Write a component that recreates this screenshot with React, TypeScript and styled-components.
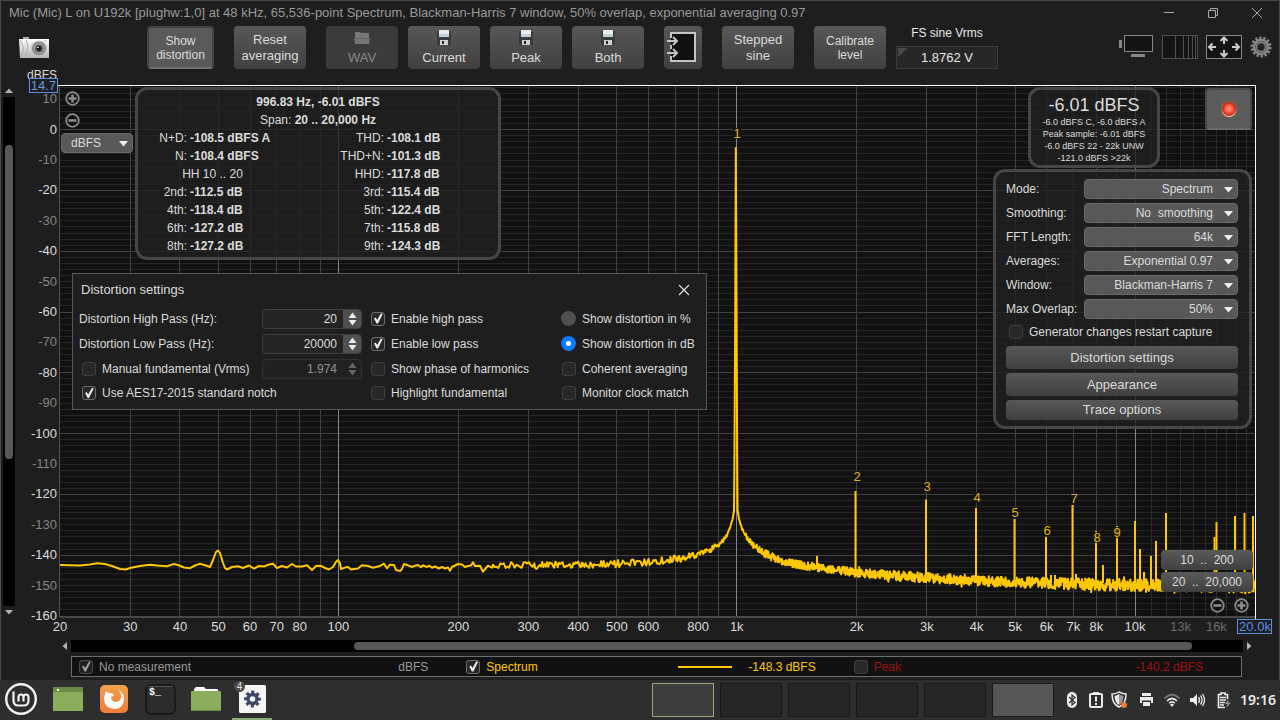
import React, { useEffect, useMemo, useRef, useState } from "react";
import styled, { createGlobalStyle, css } from "styled-components";

const sans = '"Liberation Sans", Arial, sans-serif';

const GlobalStyle = createGlobalStyle`
  * { box-sizing: border-box; }
  body { margin: 0; background: #1e1e1e; color: #dcdcdc; font: 12px/16px ${sans}; }
  button, input, select { font: inherit; color: inherit; margin: 0; }
`;

/* ---------- window frame ---------- */

const Screen = styled.div`
  display: flex;
  flex-direction: column;
  min-height: 100vh;
`;

const AppWindow = styled.main`
  flex: 1;
  display: flex;
  flex-direction: column;
  background: #1e1e1e;
  border: 1px solid #4a4a4a;
  border-bottom: 0;
  padding-bottom: 3px;
`;

const TitleBar = styled.header`
  display: flex;
  align-items: center;
  justify-content: space-between;
  height: 25px;
  padding: 0 14px 2px 8px;
`;

const WindowTitle = styled.h1`
  margin: 0;
  font-size: 13px;
  font-weight: normal;
  color: #9a9a9a;
`;

const WindowButtons = styled.div`
  display: flex;
  gap: 28px;
`;

const PlainButton = styled.button`
  display: flex;
  align-items: center;
  justify-content: center;
  padding: 0;
  border: 0;
  background: none;
  cursor: pointer;
`;

/* ---------- toolbar ---------- */

const Toolbar = styled.div`
  display: flex;
  align-items: flex-start;
  gap: 20px;
  height: 44px;
  padding: 0 7px 0 18px;
`;

const CameraButton = styled(PlainButton)`
  width: 31px;
  height: 43px;
  margin-right: 77px;
`;

const ToolGroup = styled.div<{ $gap: number }>`
  display: flex;
  gap: ${(p) => p.$gap}px;
`;

const ToolButton = styled.button<{ $pressed?: boolean; $compact?: boolean; $narrow?: boolean }>`
  display: flex;
  flex-direction: column;
  align-items: center;
  justify-content: center;
  width: ${(p) => (p.$narrow ? 38 : 72)}px;
  height: 43px;
  padding: 0;
  border: 0;
  border-radius: 4px;
  background: linear-gradient(#585858, #404040);
  font-size: ${(p) => (p.$compact ? 12 : 13)}px;
  line-height: ${(p) => (p.$compact ? 14 : 16)}px;
  ${(p) =>
    p.$pressed &&
    css`
      width: 67px;
      background: #5a5a5a;
      border: 2px solid #444;
      border-bottom-color: #707070;
    `}
  &:disabled { background: #3b3b3b; color: #8c8c8c; }
`;

const ButtonIcon = styled.span`
  display: flex;
  height: 18px;
  margin-bottom: 3px;
  align-items: center;
`;

const FsField = styled.label`
  display: flex;
  flex-direction: column;
  gap: 5px;
  width: 102px;
  text-align: center;
  line-height: 15px;
  color: #e8e8e8;
`;

const FsInput = styled.input`
  width: 102px;
  height: 23px;
  border: 1px solid #3d3d3d;
  background: linear-gradient(135deg, #484848 7px, transparent 7px) 1px 1px no-repeat, #272727;
  text-align: center;
  font-size: 13px;
`;

const ViewButtons = styled.div`
  display: flex;
  align-items: center;
  gap: 7px;
  height: 42px;
  margin-left: auto;
`;

/* ---------- graph ---------- */

const GraphRow = styled.section`
  flex: 1;
  display: flex;
  min-height: 540px;
`;

const VScroll = styled.div`
  display: flex;
  flex-direction: column;
  width: 12px;
  margin: 15px 0 20px 2px;
`;

const HScroll = styled.div`
  display: flex;
  height: 12px;
  margin: 2px 24px 0 58px;
`;

const ScrollArrow = styled(PlainButton)`
  width: 12px;
  height: 12px;
  flex: none;
`;

const VTrack = styled.div`
  flex: 1;
  display: grid;
  grid-template-rows: 48fr 314fr 147fr;
  padding: 0 2px;
  background: #000;
`;

const HTrack = styled.div`
  flex: 1;
  display: grid;
  grid-template-columns: 283fr 837fr 51fr;
  padding: 2px 0;
  background: #000;
`;

const VThumb = styled.div`
  grid-row: 2;
  border-radius: 4px;
  background: #585858;
`;

const HThumb = styled.div`
  grid-column: 2;
  border-radius: 4px;
  background: #585858;
`;

const ChartArea = styled.div`
  position: relative;
  flex: 1;
  min-width: 0;
`;

const ChartSvg = styled.svg`
  position: absolute;
  inset: 0;
  width: 100%;
  height: 100%;
  font-family: ${sans};
`;

const Panel = styled.div`
  position: absolute;
  border: 3px solid rgba(85, 85, 85, 0.75);
  border-radius: 12px;
  background: rgba(32, 32, 32, 0.8);
`;

const ResultsPanel = styled(Panel)`
  left: 120px;
  top: 17px;
  width: 366px;
  padding: 3px 0 2px;
  line-height: 18px;
  text-align: center;
`;

const ResultsTable = styled.table`
  width: 100%;
  table-layout: fixed;
  border-collapse: collapse;
  td, th { padding: 0; height: 18px; white-space: nowrap; }
  th { font-weight: normal; text-align: right; padding-right: 3px; }
  td { font-weight: bold; text-align: left; }
  .span { text-align: center; padding-right: 0; }
`;

const MeterPanel = styled(Panel)`
  top: 17px;
  right: 119px;
  width: 132px;
  padding: 4px 0 1px;
  text-align: center;
  font-size: 9px;
  line-height: 12px;
`;

const MeterValue = styled.div`
  font-size: 18px;
  line-height: 22px;
`;

const RecordButton = styled(PlainButton)`
  position: absolute;
  top: 18px;
  right: 27px;
  width: 47px;
  height: 42px;
  border: 2px solid #484848;
  border-bottom-color: #6c6c6c;
  border-radius: 4px;
  background: #5c5c5c;
`;

const SettingsPanel = styled(Panel)`
  top: 99px;
  right: 27px;
  width: 259px;
  padding: 7px 11px 6px 10px;
`;

const SettingRow = styled.label`
  display: flex;
  align-items: center;
  justify-content: space-between;
  height: 20px;
  margin-bottom: 4px;
`;

const RestartRow = styled.div`
  margin: 5px 0 6px;
`;

const SelectBox = styled.span<{ $width: number }>`
  position: relative;
  display: block;
  width: ${(p) => p.$width}px;
  height: 20px;
  svg { position: absolute; right: 5px; top: 8px; pointer-events: none; }
`;

const Select = styled.select<{ $left?: boolean }>`
  appearance: none;
  width: 100%;
  height: 20px;
  padding: ${(p) => (p.$left ? "0 18px 0 9px" : "0 24px 0 4px")};
  border: 1px solid #6a6a6a;
  border-radius: 4px;
  background: #585858;
  text-align-last: ${(p) => (p.$left ? "left" : "right")};
`;

const ButtonStack = styled.div`
  display: flex;
  flex-direction: column;
  gap: 4px;
`;

const PanelButton = styled.button<{ $short?: boolean }>`
  height: ${(p) => (p.$short ? 20 : 23)}px;
  padding: 0;
  border: 0;
  border-radius: 4px;
  background: linear-gradient(#585858, #404040);
  font-size: 13px;
`;

const UnitSelect = styled.div`
  position: absolute;
  left: 46px;
  top: 63px;
`;

const ZoomButtons = styled.div<{ $place: "y" | "x" }>`
  position: absolute;
  display: flex;
  ${(p) =>
    p.$place === "y"
      ? "left: 50px; top: 21px; flex-direction: column; gap: 7px;"
      : "right: 30px; bottom: 25px; gap: 9px;"}
`;

const RangeButtons = styled.div`
  position: absolute;
  right: 26px;
  bottom: 46px;
  display: flex;
  flex-direction: column;
  gap: 2px;
`;

const RangeButton = styled.button`
  width: 92px;
  height: 20px;
  padding: 0;
  border: 0;
  border-radius: 4px;
  background: linear-gradient(#5a5a5a, #404040);
  white-space: pre;
`;

/* ---------- form controls ---------- */

const CheckLabel = styled.label<{ $indent?: number }>`
  display: flex;
  align-items: center;
  gap: 6px;
  padding-left: ${(p) => p.$indent ?? 0}px;
  white-space: nowrap;
`;

const CheckBox = styled.input.attrs({ type: "checkbox" })`
  appearance: none;
  flex: none;
  width: 14px;
  height: 14px;
  border: 1px solid #404040;
  border-radius: 3px;
  background: #282828;
  &:checked { border-color: #6e6e6e; }
  &:checked::after {
    content: "";
    display: block;
    width: 12px;
    height: 12px;
    background: #eee;
    clip-path: polygon(17% 50%, 30% 42%, 43% 63%, 74% 8%, 90% 10%, 50% 92%, 38% 92%);
  }
  &:disabled { opacity: 0.65; }
`;

const Radio = styled.input.attrs({ type: "radio" })`
  appearance: none;
  flex: none;
  width: 15px;
  height: 15px;
  border-radius: 50%;
  background: #505050;
  &:checked { background: radial-gradient(circle, #fff 2px, #0a7aff 3px); }
`;

/* ---------- distortion dialog ---------- */

const Dialog = styled.section`
  position: absolute;
  left: 57px;
  top: 203px;
  width: 635px;
  padding: 6px 6px 4px;
  border: 1px solid #585858;
  background: #1e1e1e;
`;

const DialogHeader = styled.div`
  display: flex;
  align-items: center;
  justify-content: space-between;
  height: 20px;
  margin-bottom: 6px;
  padding: 0 10px 0 2px;
  h2 { margin: 0; font-size: 13px; font-weight: normal; }
`;

const DialogGrid = styled.div`
  display: grid;
  grid-template: 25px 25px 25px 24px / 183px 109px 190px 1fr;
  align-items: center;
`;

const WideCell = styled.div`
  grid-column: span 2;
`;

const Spinner = styled.span<{ $off?: boolean }>`
  display: flex;
  width: 100px;
  height: 20px;
  border: 1px solid #404040;
  border-radius: 4px;
  background: #242424;
  overflow: hidden;
  opacity: ${(p) => (p.$off ? 0.6 : 1)};
  input {
    flex: 1;
    min-width: 0;
    padding: 0 6px 0 0;
    border: 0;
    background: none;
    text-align: right;
  }
`;

const SpinArrows = styled.span<{ $off?: boolean }>`
  display: flex;
  flex-direction: column;
  justify-content: center;
  gap: 2px;
  width: 18px;
  background: ${(p) => (p.$off ? "none" : "#505050")};
`;

/* ---------- legend ---------- */

const Legend = styled.div`
  display: grid;
  grid-template-columns: repeat(3, 1fr);
  height: 21px;
  margin: 4px 37px 0 70px;
  padding-left: 7px;
  border: 1px solid #6e6e6e;
  background: #111;
`;

const LegendItem = styled.div<{ $color: string }>`
  display: flex;
  align-items: center;
  justify-content: space-between;
  padding-right: 38px;
  color: ${(p) => p.$color};
`;

const LegendValue = styled.span`
  display: flex;
  align-items: center;
  gap: 16px;
`;

const TraceSwatch = styled.i`
  width: 54px;
  height: 2px;
  background: #ffc800;
`;

/* ---------- desktop taskbar ---------- */

const Taskbar = styled.footer`
  display: flex;
  align-items: center;
  height: 40px;
  padding-right: 4px;
  background: #2e2e2e;
`;

const Launchers = styled.nav`
  display: flex;
  gap: 6px;
  align-self: stretch;
`;

const Launcher = styled(PlainButton)<{ $active?: boolean; $wide?: boolean }>`
  position: relative;
  width: ${(p) => (p.$wide ? 42 : 40)}px;
  border-bottom: 2px solid ${(p) => (p.$active ? "#8fae76" : "transparent")};
`;

const WindowCount = styled.span`
  position: absolute;
  left: 2px;
  top: 1px;
  width: 11px;
  height: 11px;
  border-radius: 50%;
  background: #4a4a4a;
  color: #e4e4e4;
  font-size: 10px;
  line-height: 12px;
`;

const Workspaces = styled.div`
  display: flex;
  gap: 6px;
  margin-left: auto;
`;

const Workspace = styled.button<{ $tone?: "current" | "used" }>`
  width: 62px;
  height: 34px;
  padding: 0;
  background: ${(p) => (p.$tone === "current" ? "#3c3c3c" : p.$tone === "used" ? "#565656" : "#262626")};
  border: 1px solid ${(p) => (p.$tone === "current" ? "#92ad75" : "#191919")};
`;

const Tray = styled.div`
  display: flex;
  align-items: center;
  gap: 6px;
  margin-left: 8px;
`;

const Clock = styled.time`
  font: 600 14px/18px "Noto Sans", sans-serif;
  color: #eaeaea;
`;

/* ---------- spectrum data ---------- */

const BASE_W = 1195;
const BASE_H = 531;
const DB_TOP = 14.7;
const DB_BOTTOM = -160;

// Low end of the trace, as x/y points on a 1195 x 531 plot.
const lowBand: number[][] = [
  [0, 480], [20, 480.5], [30, 479.5], [37, 478.3], [45, 479], [52, 481], [60, 484], [66, 484.5], [70, 483],
  [80, 481], [90, 479.7], [97, 480.5], [107, 481.3], [110, 480.2], [114, 479], [118, 480], [124, 482.5],
  [130, 483.2], [135, 480.5], [140, 478.8], [146, 480.5], [150, 482], [153, 475], [156, 467], [158, 465.5],
  [160, 468], [163, 478], [165, 483], [167, 484.5], [172, 482], [178, 481.3], [183, 483], [189, 480.5],
  [194, 483.6], [199, 481], [204, 481.5], [208, 479.8], [213, 478.8], [217, 483], [222, 481], [227, 482.5],
  [232, 479], [236, 481.5], [242, 481.5], [247, 480.3], [252, 485], [256, 481], [261, 480.8], [265, 483],
  [269, 484.5], [273, 482], [276, 477], [278, 475], [280, 478], [281, 484], [285, 482.6], [288, 482],
  [291, 484.5], [298, 483.5], [302, 480.3], [308, 481], [313, 482.7], [320, 481], [324, 478.7], [327, 483.3],
  [330, 479.7], [334, 480], [336, 485], [340, 486], [342, 484], [344, 479], [348, 480.3], [352, 482],
  [355, 480.7], [358, 480], [361, 482.3], [363, 480.3], [367, 482], [369, 480.7], [372, 482.7], [375, 481.5],
  [379, 483.5], [382, 482], [385, 483.5], [388, 482.5], [390, 485.7], [392, 482], [395, 480.5], [398, 479],
  [402, 479.5], [405, 482], [408, 481], [411, 480.5], [413, 477.3], [415, 481], [420, 480.7], [423, 486.7],
  [426, 483], [428, 480.7], [432, 482.7],
];

// Noisy part of the trace: x, y and half the height of the noise.
const noiseBand: number[][] = [
  [433, 481, 3.5], [475, 480.5, 3.8], [522, 480, 3.5], [558, 478.5, 3.8], [585, 477, 3.6], [608, 475, 3.5], [625, 472, 3.4],
  [640, 469, 3], [650, 465, 3], [660, 459, 2], [666, 452, 2], [670, 443, 1], [673, 432, 1], [674, 425, 0], [674.4, 380, 0],
  [675.2, 230, 0], [675.8, 63, 0], [676.6, 230, 0], [677.2, 380, 0], [677.6, 425, 0], [679, 434, 0],
  [682, 444, 1], [686, 451, 2.5], [692, 459, 3], [702, 467, 3.5], [712, 472, 4], [722, 476, 4], [740, 480, 4], [770, 484, 4],
  [800, 488, 4.5], [840, 491, 5], [880, 493.5, 5], [920, 496, 5], [960, 497.5, 5.5], [1040, 499.5, 6],
  [1120, 500.5, 6], [1195, 501, 7],
];

const peaks: number[][] = [
  [757, 471], [795.5, 406], [866, 414.5], [916, 423], [954.5, 434], [986, 452], [991, 490], [995, 490], [1012.5, 420],
  [1016, 489], [1036, 446], [1043, 480], [1057, 441], [1075, 436], [1080, 464], [1084, 487], [1091, 471], [1096, 456],
  [1106, 428], [1154.5, 452], [1156.5, 437], [1175, 431], [1184.5, 428], [1193, 431],
];

const harmonicLabels: [string, number, number][] = [
  ["1", 677, 48], ["2", 797, 391], ["3", 867, 401], ["4", 917, 412], ["5", 955, 427],
  ["6", 987, 445], ["7", 1014, 413], ["8", 1037, 452], ["9", 1057, 447],
];

function tracePoints(): number[][] {
  let seed = 7321;
  const random = () => {
    seed = (seed * 1664525 + 1013904223) % 4294967296;
    return seed / 4294967296;
  };
  const points = lowBand.slice();
  for (let i = 1; i < noiseBand.length; i++) {
    const [x0, y0, a0] = noiseBand[i - 1];
    const [x1, y1, a1] = noiseBand[i];
    const step = x0 < 475 ? 1.8 : x0 < 608 ? 1.2 : x0 < 690 ? 0.8 : 0.4;
    for (let x = x0; x < x1; x += step) {
      const t = (x - x0) / (x1 - x0);
      const spread = a0 + (a1 - a0) * t;
      const tail = random() < 0.04 ? 1.4 : 1;
      points.push([x, y0 + (y1 - y0) * t + (random() * 2 - 1) * spread * tail]);
    }
  }
  return points;
}

const LEFT = 45;
const RIGHT = 24;
const TOP = 15;
const BOTTOM = 22;

const freqLabels: [number, string][] = [
  [20, "20"], [30, "30"], [40, "40"], [50, "50"], [60, "60"], [70, "70"], [80, "80"], [100, "100"], [200, "200"],
  [300, "300"], [400, "400"], [500, "500"], [600, "600"], [800, "800"], [1000, "1k"], [2000, "2k"], [3000, "3k"],
  [4000, "4k"], [5000, "5k"], [6000, "6k"], [7000, "7k"], [8000, "8k"], [10000, "10k"], [13000, "13k"], [16000, "16k"],
];

function SpectrumChart() {
  const ref = useRef<SVGSVGElement>(null);
  const [size, setSize] = useState({ w: 1264, h: 568 });
  useEffect(() => {
    const el = ref.current;
    if (!el) return;
    const measure = () => {
      const box = el.getBoundingClientRect();
      setSize({ w: box.width, h: box.height });
    };
    measure();
    const observer = new ResizeObserver(measure);
    observer.observe(el);
    return () => observer.disconnect();
  }, []);
  const points = useMemo(tracePoints, []);

  const w = size.w - LEFT - RIGHT;
  const h = size.h - TOP - BOTTOM;
  const right = LEFT + w;
  const bottom = TOP + h;
  const sx = (x: number) => LEFT + (x * w) / BASE_W;
  const sy = (y: number) => TOP + (y * h) / BASE_H;
  const fx = (f: number) => LEFT + (w * Math.log10(f / 20)) / 3;
  const dy = (db: number) => TOP + (h * (DB_TOP - db)) / (DB_TOP - DB_BOTTOM);
  const crisp = (v: number) => Math.floor(v) + 0.5;

  const dbs: number[] = [];
  for (let db = 14; db >= DB_BOTTOM; db -= 2) dbs.push(db);
  const freqs: number[] = [];
  for (const decade of [10, 100, 1000]) for (let i = 1; i < 10; i++) if (decade * i > 20) freqs.push(decade * i);
  for (let i = 10; i < 20; i++) freqs.push(i * 1000);
  const lineColor = (f: number) =>
    f === 100 || f === 1000 || f === 10000 ? "#858585" : f > 10000 ? "#2c2c2c" : "#424242";

  const path = points.map(([x, y], i) => `${i ? "L" : "M"}${sx(x).toFixed(1)} ${sy(y).toFixed(1)}`).join("");

  return (
    <ChartSvg ref={ref} role="img" aria-label="Spectrum, level in dBFS against frequency">
      <rect x={LEFT} y={TOP} width={w} height={h} fill="#111" />
      {dbs.filter((db) => db % 20 !== 0).map((db) => (
        <path key={db} d={`M${LEFT} ${crisp(dy(db))}H${right}`} stroke="#252525" />
      ))}
      {freqs.filter((f) => f > 10000).map((f) => (
        <path key={f} d={`M${crisp(fx(f))} ${TOP}V${bottom}`} stroke={lineColor(f)} />
      ))}
      {dbs.filter((db) => db % 20 === 0).map((db) => (
        <path key={db} d={`M${LEFT} ${crisp(dy(db))}H${right}`} stroke="#424242" />
      ))}
      {freqs.filter((f) => f <= 10000).map((f) => (
        <path key={f} d={`M${crisp(fx(f))} ${TOP}V${bottom}`} stroke={lineColor(f)} />
      ))}
      <path d={`M${LEFT - 0.5} ${TOP}V${bottom + 1}`} stroke="#505050" />
      <path d={`M${LEFT} ${bottom + 1}H${right}`} stroke="#484848" strokeWidth="2" />

      <path d={path} fill="none" stroke="#ffc800" strokeWidth="2" strokeLinejoin="round" />
      {peaks.map(([x, y]) => (
        <path key={x} d={`M${sx(x)} ${sy(y)}V${sy(x < 780 ? 484 : x < 800 ? 490 : 498)}`} stroke="#ffc800" strokeWidth="2" />
      ))}
      {harmonicLabels.map(([n, x, y]) => (
        <g key={n}>
          <rect x={sx(x) - 4} y={sy(y) - 5} width="8" height="11" fill="#111" fillOpacity="0.8" />
          <text x={sx(x)} y={sy(y) + 5} fontSize="13" textAnchor="middle" fill="#e0b41c">{n}</text>
        </g>
      ))}
      <path d={`M${LEFT - 2} ${TOP + 0.5}H${right + 0.5}V${bottom + 3}`} fill="none" stroke="#fff" />

      <text x={LEFT - 3} y={TOP - 6} fontSize="12" textAnchor="end" fill="#dcdcdc">dBFS</text>
      {dbs.filter((db) => db % 10 === 0).map((db) => (
        <text key={db} x={LEFT - 3} y={Math.round(dy(db)) + 4} fontSize="13" textAnchor="end" fill={db % 20 ? "#858585" : "#dcdcdc"}>
          {db}
        </text>
      ))}
      {freqLabels.map(([f, label]) => (
        <text key={f} x={fx(f)} y={bottom + 15} fontSize="13" textAnchor="middle" fill={f > 10000 ? "#6c6c6c" : "#dcdcdc"}>
          {label}
        </text>
      ))}
      <rect x={14.5} y={TOP - 6.5} width="28" height="14" fill="#1e1e1e" stroke="#5b8fe8" />
      <text x={LEFT - 4} y={TOP + 5} fontSize="13" textAnchor="end" fill="#6897e0">14.7</text>
      <rect x={right - 17.5} y={bottom + 3.5} width="34" height="14" fill="#1e1e1e" stroke="#5b8fe8" />
      <text x={right} y={bottom + 15} fontSize="13" textAnchor="middle" fill="#5b8fe8">20.0k</text>
    </ChartSvg>
  );
}

/* ---------- icons ---------- */

const DownArrow = () => (
  <svg width="9" height="6" viewBox="0 0 9 6"><path d="M0 0H9L4.500 5.500Z" fill="#eee" /></svg>
);

const Triangle = ({ turn }: { turn: number }) => (
  <svg width="10" height="10" viewBox="0 0 10 10"><path d="M1 7H9L5 2.500Z" fill="#b4b4b4" transform={`rotate(${turn} 5 5)`} /></svg>
);

const ZoomIcon = ({ plus }: { plus?: boolean }) => (
  <svg width="15" height="15" viewBox="0 0 15 15">
    <circle cx="7.5" cy="7.500" r="6.300" fill="#111" stroke="#8c8c8c" strokeWidth="1.800" />
    <path d={plus ? "M3.500 7.500H11.500M7.500 3.500V11.500" : "M3.500 7.500H11.500"} stroke="#8c8c8c" strokeWidth="2.600" />
  </svg>
);

const CameraIcon = () => (
  <svg width="31" height="22" viewBox="0 0 31 22">
    <defs>
      <linearGradient id="cam" x1="0" y1="0" x2="0" y2="1"><stop offset="0" stopColor="#fff" /><stop offset="1" stopColor="#b4b4b4" /></linearGradient>
    </defs>
    <rect x="4" y="0" width="6" height="3" fill="#aaa" />
    <path d="M0 2H30V21H1Z" fill="url(#cam)" />
    <path d="M1 3Q7 11 2 20M7 3Q11 10 6 20" stroke="#aaa" fill="none" />
    <circle cx="20" cy="11.500" r="7.500" fill="#8c8c8c" stroke="#ccc" />
    <circle cx="20" cy="11.500" r="4.500" fill="#555" stroke="#bbb" />
    <circle cx="20" cy="11.500" r="2.200" fill="#111" />
    <circle cx="19" cy="10.500" r="0.800" fill="#fff" />
    <rect x="25" y="3" width="3" height="2" fill="#ddd" />
  </svg>
);

const FloppyIcon = () => (
  <svg width="14" height="16" viewBox="0 0 14 16">
    <rect x="0" y="1" width="14" height="14" rx="1" fill="#3a3a3a" />
    <rect x="2" y="0" width="10" height="7" fill="#e8ecee" />
    <rect x="2" y="4" width="10" height="3" fill="#c3d2d8" />
    <rect x="3" y="10" width="8" height="5" fill="#d0d0d0" />
    <rect x="5" y="11" width="2" height="3" fill="#222" />
  </svg>
);

const FolderIcon = () => (
  <svg width="18" height="16" viewBox="0 0 18 16">
    <path d="M2 2H7L8 3H16V8H17L16 14H2L1 8H2Z" fill="#777" />
    <path d="M1 8.500H17" stroke="#606060" />
  </svg>
);

const InputsIcon = () => (
  <svg width="32" height="32" viewBox="0 0 32 32">
    <rect x="4" y="2" width="24" height="28" fill="#111" />
    <path d="M4 6V1H28V29H4V24M4 13V17" fill="none" stroke="#c4c4c4" strokeWidth="2" />
    <path d="M0 9H10M6 5L10 9L6 13M0 21H10M6 17L10 21L6 25" fill="none" stroke="#c4c4c4" strokeWidth="2" />
  </svg>
);

const MonitorIcon = () => (
  <svg width="36" height="24" viewBox="0 0 36 24">
    <rect x="0" y="5" width="3" height="8" fill="#888" />
    <rect x="5.500" y="0.500" width="28" height="16" fill="#141414" stroke="#888" />
    <rect x="12" y="19" width="14" height="3" fill="#888" />
  </svg>
);

const LogGridIcon = () => (
  <svg width="37" height="24" viewBox="0 0 37 24">
    <rect x="0.500" y="0.500" width="35" height="23" fill="#141414" stroke="#505050" />
    <path d="M13.500 1V23M21.500 1V23M26.500 1V23M30.500 1V23M33.500 1V23" stroke="#505050" />
  </svg>
);

const FitIcon = () => (
  <svg width="37" height="24" viewBox="0 0 37 24">
    <rect x="0.500" y="0.500" width="35" height="23" fill="#141414" stroke="#888" />
    <path d="M18 3V9M14.500 6L18 2.500L21.500 6M18 21V15M14.500 18L18 21.500L21.500 18M3 12H10M6.500 8.500L3 12L6.500 15.500M33 12H26M29.500 8.500L33 12L29.500 15.500" fill="none" stroke="#ccc" strokeWidth="2" />
  </svg>
);

const GearIcon = () => (
  <svg width="22" height="22" viewBox="0 0 22 22">
    <circle cx="11" cy="11" r="9" fill="none" stroke="#888" strokeWidth="3" strokeDasharray="2.300 1.742" />
    <circle cx="11" cy="11" r="6" fill="#222" stroke="#868686" strokeWidth="4.500" />
    <circle cx="11" cy="11" r="5.500" fill="none" stroke="#5a5a5a" />
  </svg>
);

const Led = () => (
  <svg width="24" height="24" viewBox="0 0 24 24">
    <defs>
      <radialGradient id="glow"><stop offset="0.500" stopColor="#f06030" /><stop offset="1" stopColor="#5c5c5c" stopOpacity="0" /></radialGradient>
      <radialGradient id="led"><stop offset="0" stopColor="#ff9a8c" /><stop offset="0.600" stopColor="#ff5540" /><stop offset="1" stopColor="#d02810" /></radialGradient>
    </defs>
    <circle cx="12" cy="12" r="11" fill="url(#glow)" opacity="0.700" />
    <circle cx="12" cy="13" r="7" fill="#f0c8a0" />
    <circle cx="12" cy="12" r="6.500" fill="url(#led)" stroke="#a02818" strokeWidth="0.700" />
  </svg>
);

const SpinArrow = ({ up, off }: { up?: boolean; off?: boolean }) => (
  <svg width="9" height="6" viewBox="0 0 9 6"><path d={up ? "M0.500 6H8.500L4.500 0.500Z" : "M0.500 0H8.500L4.500 5.500Z"} fill={off ? "#999" : "#eee"} /></svg>
);

const Cross = ({ color }: { color: string }) => (
  <svg width="12" height="12" viewBox="0 0 12 12"><path d="M1 1L11 11M11 1L1 11" stroke={color} strokeWidth="1.200" /></svg>
);

/* ---------- parts ---------- */

function DropDown({ label, value }: { label: string; value: string }) {
  return (
    <SettingRow>
      {label}
      <SelectBox $width={154}>
        <Select defaultValue={value}><option>{value}</option></Select>
        <DownArrow />
      </SelectBox>
    </SettingRow>
  );
}

function NumberField({ id, label, value, off }: { id?: string; label: string; value: string; off?: boolean }) {
  return (
    <Spinner $off={off}>
      <input id={id} aria-label={id ? undefined : label} inputMode="decimal" defaultValue={value} disabled={off} />
      <SpinArrows $off={off}>
        <PlainButton type="button" aria-label={`${label} up`} disabled={off}><SpinArrow up off={off} /></PlainButton>
        <PlainButton type="button" aria-label={`${label} down`} disabled={off}><SpinArrow off={off} /></PlainButton>
      </SpinArrows>
    </Spinner>
  );
}

function Check({ text, on, indent, off }: { text: string; on?: boolean; indent?: number; off?: boolean }) {
  return (
    <CheckLabel $indent={indent}>
      <CheckBox defaultChecked={on} disabled={off} />
      {text}
    </CheckLabel>
  );
}

const results: [string, string, string, string][] = [
  ["N+D:", "-108.5 dBFS A", "THD:", "-108.1 dB"],
  ["N:", "-108.4 dBFS", "THD+N:", "-101.3 dB"],
  ["HH 10 .. 20", "", "HHD:", "-117.8 dB"],
  ["2nd:", "-112.5 dB", "3rd:", "-115.4 dB"],
  ["4th:", "-118.4 dB", "5th:", "-122.4 dB"],
  ["6th:", "-127.2 dB", "7th:", "-115.8 dB"],
  ["8th:", "-127.2 dB", "9th:", "-124.3 dB"],
];

function Results() {
  return (
    <ResultsPanel>
      <div><b>996.83 Hz, -6.01 dBFS</b></div>
      <div>Span: <b>20 .. 20,000 Hz</b></div>
      <ResultsTable>
        <colgroup>
          <col width="52" /><col width="97" /><col width="100" /><col />
        </colgroup>
        <tbody>
          {results.map(([a, av, b, bv]) => (
            <tr key={b}>
              {av ? <><th>{a}</th><td>{av}</td></> : <th className="span" colSpan={2}>{a}</th>}
              <th>{b}</th><td>{bv}</td>
            </tr>
          ))}
        </tbody>
      </ResultsTable>
    </ResultsPanel>
  );
}

function DistortionDialog() {
  return (
    <Dialog aria-label="Distortion settings">
      <DialogHeader>
        <h2>Distortion settings</h2>
        <PlainButton aria-label="Close"><Cross color="#ddd" /></PlainButton>
      </DialogHeader>
      <DialogGrid>
        <label htmlFor="high-pass">Distortion High Pass (Hz):</label>
        <NumberField id="high-pass" label="Distortion High Pass (Hz)" value="20" />
        <Check text="Enable high pass" on />
        <CheckLabel><Radio name="unit" />Show distortion in %</CheckLabel>

        <label htmlFor="low-pass">Distortion Low Pass (Hz):</label>
        <NumberField id="low-pass" label="Distortion Low Pass (Hz)" value="20000" />
        <Check text="Enable low pass" on />
        <CheckLabel><Radio name="unit" defaultChecked />Show distortion in dB</CheckLabel>

        <Check text="Manual fundamental (Vrms)" indent={3} />
        <NumberField label="Manual fundamental" value="1.974" off />
        <Check text="Show phase of harmonics" />
        <Check text="Coherent averaging" indent={1} />

        <WideCell><Check text="Use AES17-2015 standard notch" on indent={3} /></WideCell>
        <Check text="Highlight fundamental" />
        <Check text="Monitor clock match" indent={1} />
      </DialogGrid>
    </Dialog>
  );
}

function TaskIcons() {
  return (
    <Launchers aria-label="Applications">
      <Launcher $wide aria-label="Menu">
        <svg width="34" height="34" viewBox="0 0 34 34">
          <circle cx="17" cy="17" r="14.800" fill="none" stroke="#f2f2f2" strokeWidth="2.400" />
          <path d="M9.500 9.500V18.500Q9.500 23.500 14.500 23.500H19.500Q24.500 23.500 24.500 18.500V15.500Q24.500 12.500 22 12.500Q19.500 12.500 19.500 15.500V19.500M19.500 15.500Q19.500 12.500 17 12.500Q14.500 12.500 14.500 15.500V19.500" fill="none" stroke="#f2f2f2" strokeWidth="2.200" />
        </svg>
      </Launcher>
      <Launcher aria-label="Desktop">
        <svg width="30" height="24" viewBox="0 0 30 24"><rect width="30" height="24" fill="#8aae5c" /><rect width="30" height="5" fill="#6a8a48" /><rect x="4" y="2" width="2" height="2" fill="#fff" /></svg>
      </Launcher>
      <Launcher aria-label="Firefox">
        <svg width="30" height="30" viewBox="0 0 30 30">
          <defs><linearGradient id="fx" x1="0" y1="0" x2="0" y2="1"><stop offset="0" stopColor="#f5a04c" /><stop offset="1" stopColor="#f07c3c" /></linearGradient></defs>
          <rect x="1" y="1" width="28" height="28" rx="5" fill="url(#fx)" />
          <path d="M7 7Q8 9 11 9Q14 9 15 11Q14 13 12 13Q12 17 16 18Q21 18 22 14Q23 11 20 6Q26 10 25 16Q24 25 15 25Q6 24 5 16Q5 11 7 7Z" fill="#fff" />
          <path d="M21 7Q24 10 23.500 14" stroke="#fbd5b8" fill="none" />
        </svg>
      </Launcher>
      <Launcher aria-label="Terminal">
        <svg width="31" height="31" viewBox="0 0 31 31">
          <rect x="1" y="1" width="29" height="29" rx="5" fill="#2c2c2c" stroke="#131313" strokeWidth="1.500" />
          <path d="M3 2.500H28" stroke="#555" />
          <text x="4" y="11" fontFamily="Liberation Mono, monospace" fontWeight="bold" fontSize="10" fill="#fff">$_</text>
        </svg>
      </Launcher>
      <Launcher aria-label="Files">
        <svg width="30" height="26" viewBox="0 0 30 26"><path d="M3 6V3L5 1H13L15 3H27V8H3Z" fill="#fff" /><rect y="5" width="30" height="20" rx="1" fill="#8aae5c" /><path d="M0 24.500H30" stroke="#6a8a48" /></svg>
      </Launcher>
      <Launcher $active aria-label="Analyzer">
        <svg width="27" height="28" viewBox="0 0 27 28">
          <rect width="27" height="28" rx="1.500" fill="#f6f6f6" />
          <circle cx="13.500" cy="14" r="6.900" fill="none" stroke="#3c4664" strokeWidth="3" strokeDasharray="3 2.419" strokeDashoffset="1.500" />
          <circle cx="13.500" cy="14" r="4.500" fill="none" stroke="#3c4664" strokeWidth="3.400" />
        </svg>
        <WindowCount>4</WindowCount>
      </Launcher>
    </Launchers>
  );
}

function TrayIcons() {
  const white = "#ececec";
  return (
    <Tray>
      <svg width="20" height="20" viewBox="0 0 20 20"><rect x="5" y="2" width="10" height="16" rx="5" fill={white} /><path d="M7 7L13 12.500L10 15V5L13 7.500L7 13" fill="none" stroke="#2e2e2e" strokeWidth="1.200" /></svg>
      <svg width="16" height="20" viewBox="0 0 16 20"><rect x="2" y="4" width="12" height="13" rx="1" fill="none" stroke={white} strokeWidth="2" /><rect x="5" y="2" width="6" height="3" fill={white} /><path d="M8 6.500V11.500M8 13V15" stroke={white} strokeWidth="2" /></svg>
      <svg width="20" height="20" viewBox="0 0 20 20"><path d="M9 2Q13 4 16 4Q16 14 9 17Q2 14 2 4Q6 4 9 2Z" fill="none" stroke={white} strokeWidth="1.500" /><path d="M9 4V15Q5 13 4.500 6Q7 5.500 9 4Z" fill={white} /><path d="M9 4V15Q13 13 13.500 6Q11 5.500 9 4Z" fill="#999" /><circle cx="14" cy="15" r="3" fill="#f07c3c" /></svg>
      <svg width="20" height="20" viewBox="0 0 20 20"><path d="M6 3H15V6H6ZM4 7H17V13H15V10.500H6V13H4ZM7 12H14V16H7Z" fill={white} /></svg>
      <svg width="20" height="20" viewBox="0 0 20 20"><g fill="none" strokeWidth="1.700"><path d="M2.500 8.500Q10 1 17.500 8.500" stroke="#777" /><path d="M5 11Q10 6 15 11" stroke={white} /><path d="M7.200 13.200Q10 10.500 12.800 13.200" stroke={white} /></g><path d="M8 14.500Q10 13 12 14.500L10 17Z" fill={white} /></svg>
      <svg width="20" height="20" viewBox="0 0 20 20"><path d="M2 8H5L9 4V16L5 12H2Z" fill={white} /><path d="M10.500 7Q12.500 10 10.500 13M12.500 5.500Q15.500 10 12.500 14.500M14.500 4Q18.500 10 14.500 16" fill="none" stroke={white} strokeWidth="1.300" /></svg>
      <svg width="20" height="20" viewBox="0 0 20 20"><path d="M13.500 9V4.500H11V3H7V4.500H4.500V17.500H11" fill="none" stroke={white} strokeWidth="1.700" /><path d="M6 7.500H12M6 10H12M6 12.500H11M6 15H10" stroke={white} strokeWidth="1.500" /><path d="M14.500 9L11 14H13.500L12 18L17 12.500H14Z" fill="#999" /></svg>
      <Clock>19:16</Clock>
    </Tray>
  );
}

export default function App() {
  return (
    <Screen>
      <GlobalStyle />
      <AppWindow>
        <TitleBar>
          <WindowTitle>
            Mic (Mic) L on U192k [plughw:1,0] at 48 kHz, 65,536-point Spectrum, Blackman-Harris 7 window, 50% overlap,
            exponential averaging 0.97
          </WindowTitle>
          <WindowButtons>
            <PlainButton aria-label="Minimize"><svg width="16" height="12" viewBox="0 0 16 12"><path d="M3 5.500H13" stroke="#aaa" /></svg></PlainButton>
            <PlainButton aria-label="Restore"><svg width="16" height="12" viewBox="0 0 16 12"><path d="M3.500 3.500H10.500V10.500H3.500ZM5.500 3.500V1.500H12.500V8.500H10.500" fill="none" stroke="#aaa" /></svg></PlainButton>
            <PlainButton aria-label="Close window"><svg width="16" height="12" viewBox="0 0 16 12"><path d="M3 1L13 11M13 1L3 11" stroke="#aaa" /></svg></PlainButton>
          </WindowButtons>
        </TitleBar>

        <Toolbar>
          <CameraButton aria-label="Capture image"><CameraIcon /></CameraButton>
          <ToolButton $pressed $compact>Show<br />distortion</ToolButton>
          <ToolButton>Reset<br />averaging</ToolButton>
          <ToolGroup $gap={10}>
            <ToolButton disabled><ButtonIcon><FolderIcon /></ButtonIcon>WAV</ToolButton>
            <ToolButton><ButtonIcon><FloppyIcon /></ButtonIcon>Current</ToolButton>
            <ToolButton><ButtonIcon><FloppyIcon /></ButtonIcon>Peak</ToolButton>
            <ToolButton><ButtonIcon><FloppyIcon /></ButtonIcon>Both</ToolButton>
          </ToolGroup>
          <ToolButton $narrow aria-label="Inputs"><InputsIcon /></ToolButton>
          <ToolButton>Stepped<br />sine</ToolButton>
          <ToolGroup $gap={10}>
            <ToolButton $compact>Calibrate<br />level</ToolButton>
            <FsField>FS sine Vrms<FsInput defaultValue="1.8762 V" /></FsField>
          </ToolGroup>
          <ViewButtons>
            <PlainButton aria-label="Scrollbars"><MonitorIcon /></PlainButton>
            <PlainButton aria-label="Frequency axis"><LogGridIcon /></PlainButton>
            <PlainButton aria-label="Graph limits"><FitIcon /></PlainButton>
            <PlainButton aria-label="Controls"><GearIcon /></PlainButton>
          </ViewButtons>
        </Toolbar>

        <GraphRow>
          <VScroll>
            <ScrollArrow aria-label="Scroll up"><Triangle turn={0} /></ScrollArrow>
            <VTrack><VThumb /></VTrack>
            <ScrollArrow aria-label="Scroll down"><Triangle turn={180} /></ScrollArrow>
          </VScroll>
          <ChartArea>
            <SpectrumChart />
            <ZoomButtons $place="y">
              <PlainButton aria-label="Zoom in level"><ZoomIcon plus /></PlainButton>
              <PlainButton aria-label="Zoom out level"><ZoomIcon /></PlainButton>
            </ZoomButtons>
            <UnitSelect>
              <SelectBox $width={72}>
                <Select $left aria-label="Level unit" defaultValue="dBFS"><option>dBFS</option></Select>
                <DownArrow />
              </SelectBox>
            </UnitSelect>
            <Results />
            <MeterPanel>
              <MeterValue>-6.01 dBFS</MeterValue>
              <div>-6.0 dBFS C, -6.0 dBFS A</div>
              <div>Peak sample: -6.01 dBFS</div>
              <div>-6.0 dBFS 22 - 22k UNW</div>
              <div>-121.0 dBFS &gt;22k</div>
            </MeterPanel>
            <RecordButton aria-label="Record"><Led /></RecordButton>
            <SettingsPanel>
              <DropDown label="Mode:" value="Spectrum" />
              <DropDown label="Smoothing:" value={"No\u00a0 smoothing"} />
              <DropDown label="FFT Length:" value="64k" />
              <DropDown label="Averages:" value="Exponential 0.97" />
              <DropDown label="Window:" value="Blackman-Harris 7" />
              <DropDown label="Max Overlap:" value="50%" />
              <RestartRow><Check text="Generator changes restart capture" indent={3} /></RestartRow>
              <ButtonStack>
                <PanelButton>Distortion settings</PanelButton>
                <PanelButton>Appearance</PanelButton>
                <PanelButton $short>Trace options</PanelButton>
              </ButtonStack>
            </SettingsPanel>
            <RangeButtons>
              <RangeButton>10  ..  200</RangeButton>
              <RangeButton>20  ..  20,000</RangeButton>
            </RangeButtons>
            <ZoomButtons $place="x">
              <PlainButton aria-label="Zoom out frequency"><ZoomIcon /></PlainButton>
              <PlainButton aria-label="Zoom in frequency"><ZoomIcon plus /></PlainButton>
            </ZoomButtons>
            <DistortionDialog />
          </ChartArea>
        </GraphRow>

        <HScroll>
          <ScrollArrow aria-label="Scroll left"><Triangle turn={-90} /></ScrollArrow>
          <HTrack><HThumb /></HTrack>
          <ScrollArrow aria-label="Scroll right"><Triangle turn={90} /></ScrollArrow>
        </HScroll>

        <Legend>
          <LegendItem $color="#9a9a9a"><Check text="No measurement" on off /><span>dBFS</span></LegendItem>
          <LegendItem $color="#ffc800"><Check text="Spectrum" on /><LegendValue><TraceSwatch />-148.3 dBFS</LegendValue></LegendItem>
          <LegendItem $color="#a01010"><Check text="Peak" /><span>-140.2 dBFS</span></LegendItem>
        </Legend>
      </AppWindow>

      <Taskbar>
        <TaskIcons />
        <Workspaces aria-label="Workspaces">
          <Workspace $tone="current" aria-label="Workspace 1" />
          <Workspace aria-label="Workspace 2" />
          <Workspace aria-label="Workspace 3" />
          <Workspace aria-label="Workspace 4" />
          <Workspace aria-label="Workspace 5" />
          <Workspace $tone="used" aria-label="Workspace 6" />
        </Workspaces>
        <TrayIcons />
      </Taskbar>
    </Screen>
  );
}
